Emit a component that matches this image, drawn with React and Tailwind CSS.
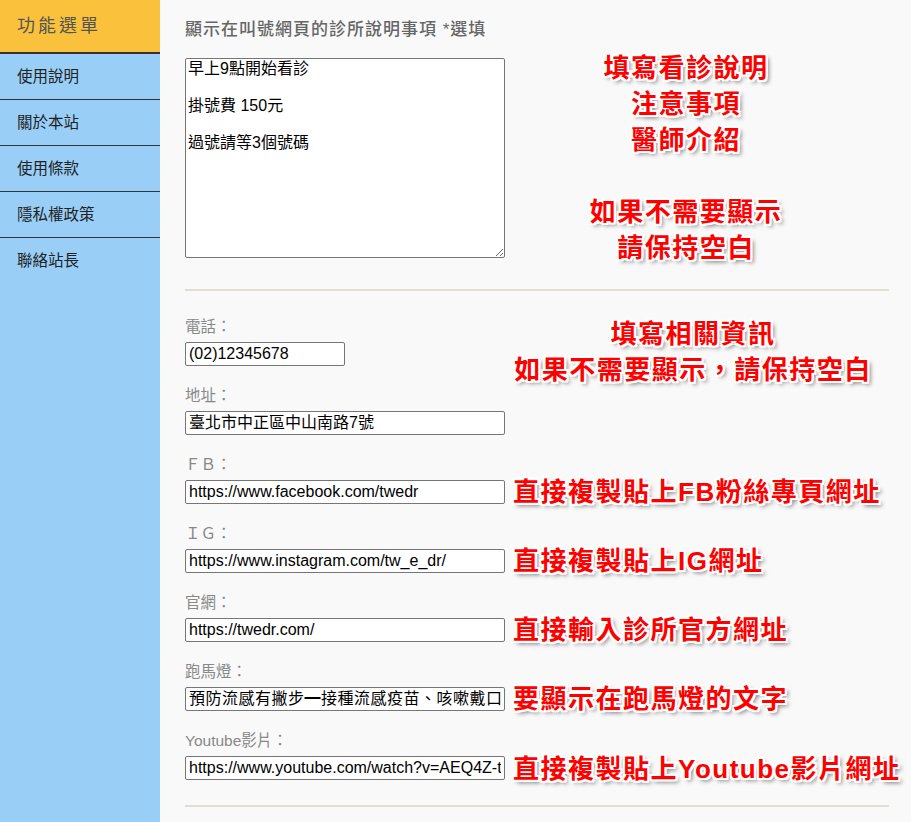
import React from 'react';

const menu = ['使用說明', '關於本站', '使用條款', '隱私權政策', '聯絡站長'];

const fields = [
  { label: '電話：', value: '(02)12345678', w: 'w-[160px]' },
  { label: '地址：', value: '臺北市中正區中山南路7號', w: 'w-[320px]' },
  { label: 'ＦＢ：', value: 'https://www.facebook.com/twedr', w: 'w-[320px]' },
  { label: 'ＩＧ：', value: 'https://www.instagram.com/tw_e_dr/', w: 'w-[320px]' },
  { label: '官網：', value: 'https://twedr.com/', w: 'w-[320px]' },
  { label: '跑馬燈：', value: '預防流感有撇步━接種流感疫苗、咳嗽戴口罩，勤洗手', w: 'w-[320px]', spaced: true },
  { label: 'Youtube影片：', value: 'https://www.youtube.com/watch?v=AEQ4Z-tw', w: 'w-[320px]' },
];

// red call-outs pasted over the screenshot
const notes = [
  { top: 'top-[492px]', text: '直接複製貼上FB粉絲專頁網址' },
  { top: 'top-[561px]', text: '直接複製貼上IG網址' },
  { top: 'top-[630px]', text: '直接輸入診所官方網址' },
  { top: 'top-[699px]', text: '要顯示在跑馬燈的文字' },
  { top: 'top-[769px]', text: '直接複製貼上Youtube影片網址' },
];

const noteCls =
  "absolute font-bold text-[26px] leading-[36px] tracking-[1.5px] text-[#f00] whitespace-nowrap [font-family:'Liberation_Sans','Noto_Sans_CJK_TC',sans-serif] [text-shadow:2px_0_0_#fff,-2px_0_0_#fff,0_2px_0_#fff,0_-2px_0_#fff,2px_2px_0_#fff,-2px_-2px_0_#fff,2px_-2px_0_#fff,-2px_2px_0_#fff,3px_3px_4px_rgba(0,0,0,0.55)]";

export default function App() {
  return (
    <div className="relative flex min-h-[822px] bg-[#f9f9f9] [font-family:'Liberation_Sans','Noto_Sans_CJK_TC',sans-serif]">
      <aside className="w-[160px] shrink-0 bg-[#99cff7]">
        <div className="h-[54px] flex items-center pl-[17px] bg-[#f9c13c] border-b-2 border-[#333] text-[18px] tracking-[3px] text-[#555]">功能選單</div>
        {menu.map((m, i) => (
          <div key={m} className={`h-[46px] flex items-center pl-[17px] text-[15.5px] text-[#222] ${i < menu.length - 1 ? 'border-b border-[#333]' : ''}`}>{m}</div>
        ))}
      </aside>

      <main className="flex-1 pl-[25px] pr-[22px] pt-[18px]">
        <div className="h-[24px] leading-[24px] text-[17px] tracking-[1px] font-medium text-[#666]">顯示在叫號網頁的診所說明事項 *選填</div>
        <textarea
          className="block mt-[16px] w-[320px] h-[200px] bg-white border border-[#767676] rounded-[2px] px-[2px] py-[1px] text-[16px] leading-[18.5px] text-black resize"
          defaultValue={'早上9點開始看診\n\n掛號費 150元\n\n過號請等3個號碼'}
        />
        <div className="mt-[31px] h-[2px] bg-[#e2ddd5]" />

        <div className="mt-[26px] flex flex-col gap-[20px]">
          {fields.map(f => (
            <div key={f.label}>
              <div className="h-[20px] leading-[20px] text-[15.5px] text-[#888]">{f.label}</div>
              <input
                className={`block mt-[5px] h-[24px] ${f.w} bg-white border border-[#767676] rounded-[2px] px-[3px] text-[16px] text-black ${f.spaced ? 'tracking-[0.5px]' : ''}`}
                defaultValue={f.value}
              />
            </div>
          ))}
        </div>
        <div className="mt-[25px] h-[2px] bg-[#e2ddd5]" />
      </main>

      <div className={`${noteCls} top-[50px] left-[560px] w-[252px] text-center`}>
        填寫看診說明<br />注意事項<br />醫師介紹<br /><br />如果不需要顯示<br />請保持空白
      </div>
      <div className={`${noteCls} top-[316px] left-[493px] w-[400px] text-center`}>
        填寫相關資訊<br />如果不需要顯示，請保持空白
      </div>
      {notes.map(n => (
        <div key={n.text} className={`${noteCls} ${n.top} left-[513px] -translate-y-1/2`}>{n.text}</div>
      ))}
    </div>
  );
}
